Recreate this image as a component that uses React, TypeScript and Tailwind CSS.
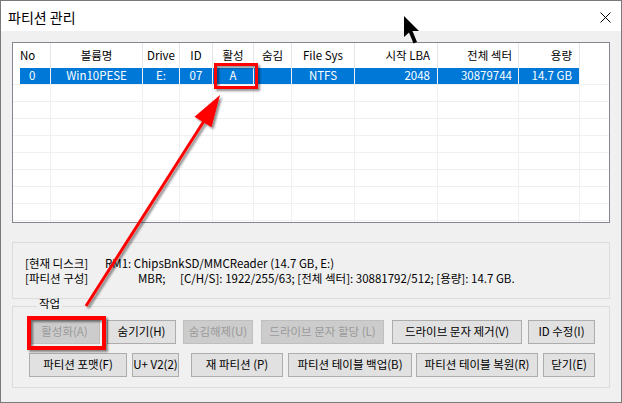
import React from "react";

type Col = { title: string; w: string; align: string };

const cols: Col[] = [
  { title: "No", w: "w-[38px]", align: "justify-start pl-[7px]" },
  { title: "볼륨명", w: "w-[92px]", align: "justify-center" },
  { title: "Drive", w: "w-[37px]", align: "justify-center" },
  { title: "ID", w: "w-[33px]", align: "justify-center" },
  { title: "활성", w: "w-[41px]", align: "justify-center" },
  { title: "숨김", w: "w-[38px]", align: "justify-center" },
  { title: "File Sys", w: "w-[63px]", align: "justify-center" },
  { title: "시작 LBA", w: "w-[83px]", align: "justify-end pr-[7px]" },
  { title: "전체 섹터", w: "w-[81px]", align: "justify-end pr-[6px]" },
  { title: "용량", w: "w-[61px]", align: "justify-end pr-[7px]" },
];

const row = ["0", "Win10PESE", "E:", "07", "A", "", "NTFS", "2048", "30879744", "14.7 GB"];

type Btn = { label: string; cls: string; disabled?: boolean };

const row1: Btn[] = [
  { label: "활성화(A)", cls: "w-[71px]", disabled: true },
  { label: "숨기기(H)", cls: "w-[69px] ml-[7px]" },
  { label: "숨김해제(U)", cls: "w-[70px] ml-[7px]", disabled: true },
  { label: "드라이브 문자 할당 (L)", cls: "w-[123px] ml-[8px]", disabled: true },
  { label: "드라이브 문자 제거(V)", cls: "w-[130px] ml-[8px]" },
  { label: "ID 수정(I)", cls: "w-[67px] ml-[6px]" },
];

const row2: Btn[] = [
  { label: "파티션 포맷(F)", cls: "w-[98px]" },
  { label: "U+ V2(2)", cls: "w-[47px] ml-[5px]" },
  { label: "재 파티션 (P)", cls: "w-[92px] ml-[12px]" },
  { label: "파티션 테이블 백업(B)", cls: "w-[124px] ml-[5px]" },
  { label: "파티션 테이블 복원(R)", cls: "w-[122px] ml-[4px]" },
  { label: "닫기(E)", cls: "w-[52px] ml-[5px]" },
];

function Button({ b }: { b: Btn }) {
  const base = "h-[24px] shrink-0 border flex items-center justify-center whitespace-nowrap";
  const look = b.disabled
    ? "bg-[#cccccc] border-[#bfbfbf] text-[#9a9a9a]"
    : "bg-[#e1e1e1] border-[#adadad] text-black";
  return <div className={`${base} ${look} ${b.cls}`}>{b.label}</div>;
}

function Overlay() {
  return (
    <svg className="absolute inset-0 pointer-events-none" width={622} height={403}>
      <defs>
        <filter id="sh" x="-20%" y="-20%" width="140%" height="140%">
          <feDropShadow dx="2" dy="2" stdDeviation="1.3" floodColor="#000" floodOpacity="0.45" />
        </filter>
      </defs>
      <g filter="url(#sh)">
        <rect x={214.5} y={63.5} width={41} height={23} fill="none" stroke="#ff0000" strokeWidth={3} />
        <rect x={28} y={317} width={75} height={30} fill="none" stroke="#ff0000" strokeWidth={4} />
        <line x1={85} y1={305} x2={203} y2={120} stroke="#ff0000" strokeWidth={3} />
        <polygon points="219,94 210.5,126.3 193.5,115.7" fill="#ff0000" />
      </g>
      {/* mouse cursor */}
      <polygon
        points="403,15 403,36 408,31.5 412.5,42.5 416,41 411.5,30 418,30"
        fill="#000"
      />
    </svg>
  );
}

export default function App() {
  return (
    <div className="relative w-[622px] h-[403px] border border-[#7a7a7a] flex flex-col overflow-hidden font-['Noto_Sans_CJK_KR',sans-serif] text-[11.5px] text-black">
      {/* title bar */}
      <div className="h-[30px] shrink-0 bg-white flex items-center justify-between pl-[7px] pr-[10px]">
        <span className="text-[14px] leading-none pt-[2px]">파티션 관리</span>
        <svg width="11" height="11" viewBox="0 0 11 11" className="mt-[2px]">
          <path d="M0.5 0.5 L10.5 10.5 M10.5 0.5 L0.5 10.5" stroke="#000" strokeWidth="1" />
        </svg>
      </div>

      {/* body */}
      <div className="flex-1 bg-[#f0f0f0] px-[11px] pt-[11px]">
        {/* list view */}
        <div className="h-[181px] bg-white border border-[#828790] overflow-hidden">
          <div className="flex h-[25px]">
            {cols.map((c) => (
              <div key={c.title} className={`${c.w} shrink-0 flex items-center border-r border-[#e5e5e5] ${c.align}`}>
                {c.title}
              </div>
            ))}
          </div>
          <div className="flex h-[17px] border-b border-[#f0f0f0]">
            {cols.map((c, i) => (
              <div key={c.title} className={`${c.w} shrink-0 flex border-r border-[#f0f0f0]`}>
                {i === 0 ? (
                  <div className="ml-[7px] flex-1 bg-[#0078d7] text-white flex items-center pl-[9px]">{row[0]}</div>
                ) : (
                  <div className={`flex-1 bg-[#0078d7] text-white flex items-center ${c.align}`}>{row[i]}</div>
                )}
              </div>
            ))}
          </div>
          {Array.from({ length: 8 }).map((_, r) => (
            <div key={r} className="flex h-[17px] border-b border-[#f0f0f0]">
              {cols.map((c) => (
                <div key={c.title} className={`${c.w} shrink-0 border-r border-[#f0f0f0]`} />
              ))}
            </div>
          ))}
          <div className="flex h-[2px]">
            {cols.map((c) => (
              <div key={c.title} className={`${c.w} shrink-0 border-r border-[#f0f0f0]`} />
            ))}
          </div>
        </div>

        {/* disk info */}
        <div className="mt-[19px] h-[57px] border border-[#dcdcdc] pl-[12px] pt-[13px] leading-[15px]">
          <div className="flex">
            <span className="w-[80px] shrink-0">[현재 디스크]</span>
            <span>RM1: ChipsBnkSD/MMCReader (14.7 GB, E:)</span>
          </div>
          <div className="flex">
            <span className="w-[80px] shrink-0">[파티션 구성]</span>
            <span className="ml-[33px] w-[42px] shrink-0">MBR;</span>
            <span>[C/H/S]: 1922/255/63; [전체 섹터]: 30881792/512; [용량]: 14.7 GB.</span>
          </div>
        </div>

        {/* work group */}
        <fieldset className="h-[89px] border border-[#dcdcdc] pl-[16px] pt-[7px]">
          <legend className="relative -top-[3px] ml-[8px] px-[2px] leading-[14px]">작업</legend>
          <div className="flex">
            {row1.map((b) => (
              <Button key={b.label} b={b} />
            ))}
          </div>
          <div className="flex mt-[9px]">
            {row2.map((b) => (
              <Button key={b.label} b={b} />
            ))}
          </div>
        </fieldset>
      </div>

      <Overlay />
    </div>
  );
}
